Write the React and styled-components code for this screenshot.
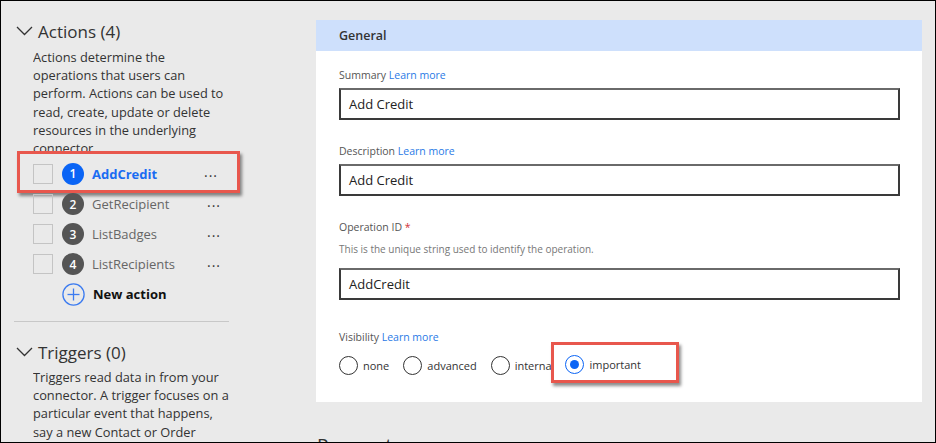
import React from 'react';
import styled, { createGlobalStyle } from 'styled-components';

const GlobalStyle = createGlobalStyle`
  html, body {
    margin: 0;
    padding: 0;
    background: #fff;
  }
  body {
    font-family: 'Open Sans', 'Noto Sans', sans-serif;
    color: #333;
  }
`;

const Frame = styled.div`
  width: 936px;
  height: 443px;
  box-sizing: border-box;
  border: 1px solid #000;
  background: #eaeaea;
  overflow: hidden;
  display: flex;
`;

const Sidebar = styled.aside`
  width: 315px;
  flex-shrink: 0;
  padding: 17px 0 0 15px;
  box-sizing: border-box;
`;

const SectionHeader = styled.div`
  display: flex;
  align-items: center;
  gap: 5px;
  height: 26px;
  margin-top: ${props => props.$top ?? 0}px;
  font-size: 17px;
  color: #333;
`;

const Description = styled.p`
  margin: ${props => props.$top}px 0 0 17px;
  font-size: 12.8px;
  line-height: 18.2px;
  color: #333;
  height: ${props => (props.$clip ? `${props.$clip}px` : 'auto')};
  overflow: hidden;

  span {
    display: block;
    white-space: nowrap;
  }
`;

const ActionList = styled.div`
  display: flex;
  flex-direction: column;
  width: 223px;
  margin-left: 1px;
`;

const ActionRow = styled.div`
  display: flex;
  align-items: center;
  box-sizing: border-box;
  height: ${props => (props.$highlighted ? 42 : 30)}px;
  padding: ${props => (props.$highlighted ? '3px 19px 0 13px' : '0 19px 0 16px')};
  border: ${props => (props.$highlighted ? '3px solid #e8574d' : 'none')};
  box-shadow: ${props => (props.$highlighted ? '2px 3px 3px rgba(0,0,0,0.45)' : 'none')};
  margin: ${props => (props.$highlighted ? '-1px 0 -4px' : '0')};
  position: relative;
`;

const Checkbox = styled.span`
  width: 20px;
  height: 20px;
  box-sizing: border-box;
  border: 1px solid #c4c4c4;
  flex-shrink: 0;
`;

const Badge = styled.span`
  width: 22px;
  height: 22px;
  border-radius: 50%;
  margin-left: 9px;
  background: ${props => (props.$active ? '#0a64f5' : '#555')};
  color: #fff;
  font-size: 12px;
  font-weight: 600;
  display: flex;
  align-items: center;
  justify-content: center;
  flex-shrink: 0;
`;

const ActionName = styled.span`
  margin-left: 8px;
  font-size: 13px;
  font-weight: ${props => (props.$active ? 700 : 400)};
  color: ${props => (props.$active ? '#1b6cf2' : '#666')};
`;

const Dots = styled.span`
  margin-left: auto;
  font-size: 14px;
  letter-spacing: 1px;
  color: #333;
  line-height: 1;
  padding-bottom: 4px;
`;

const NewAction = styled.div`
  display: flex;
  align-items: center;
  height: 30px;
  padding-left: 45px;
  gap: 8px;
  font-size: 13px;
  font-weight: 700;
  color: #111;
`;

const Divider = styled.hr`
  border: none;
  border-top: 1px solid #c8c8c8;
  width: 215px;
  margin: 12px 0 0 -2px;
`;

const Main = styled.main`
  flex: 1;
  padding: 19px 13px 0 0;
  display: flex;
  flex-direction: column;
`;

const Card = styled.section`
  background: #fff;
  height: 382px;
  flex-shrink: 0;
`;

const CardHeader = styled.div`
  height: 31px;
  background: #cee0fc;
  display: flex;
  align-items: center;
  padding-left: 23px;
  font-size: 12.5px;
  font-weight: 600;
  color: #333;
`;

const CardBody = styled.div`
  padding: 16px 22px 0 23px;
`;

const Field = styled.div`
  margin-bottom: ${props => props.$gap ?? 23}px;
`;

const Label = styled.div`
  font-size: 10.5px;
  line-height: 16px;
  color: #555;
  margin-bottom: ${props => props.$mb ?? 5}px;
`;

const Link = styled.span`
  color: #2a7ae6;
`;

const Required = styled.span`
  color: #d13438;
`;

const Hint = styled.div`
  font-size: 10px;
  line-height: 16px;
  color: #777;
  margin: 6px 0 11px;
`;

const Input = styled.div`
  height: 32px;
  box-sizing: border-box;
  border: 2px solid #3a3a3a;
  border-top-color: #6a6a6a;
  display: flex;
  align-items: center;
  padding-left: 8px;
  font-size: 13px;
  color: #222;
`;

const RadioGroup = styled.div`
  display: flex;
  align-items: center;
  gap: 14px;
  margin-top: 10px;
`;

const RadioOption = styled.label`
  display: flex;
  align-items: center;
  gap: 5px;
  font-size: 11px;
  color: #333;
  box-sizing: border-box;
  background: #fff;
  ${props =>
    props.$highlighted &&
    `
    height: 41px;
    padding: 3px 35px 0 11px;
    margin: -13px 0 -8px -17px;
    border: 3px solid #e8574d;
    box-shadow: 2px 3px 3px rgba(0,0,0,0.45);
    position: relative;
  `}
`;

const RadioCircle = styled.span`
  width: 19px;
  height: 19px;
  box-sizing: border-box;
  border-radius: 50%;
  border: 1.5px solid ${props => (props.$checked ? '#0a64f5' : '#333')};
  display: flex;
  align-items: center;
  justify-content: center;
  &::after {
    content: '';
    display: ${props => (props.$checked ? 'block' : 'none')};
    width: 9px;
    height: 9px;
    border-radius: 50%;
    background: #0a64f5;
  }
`;

const NextHeading = styled.div`
  margin: 30px 0 0 1px;
  font-size: 19px;
  color: #333;
`;

function Chevron() {
  return (
    <svg width="17" height="10" viewBox="0 0 17 10">
      <polyline points="1,1 8.5,8.5 16,1" fill="none" stroke="#333" strokeWidth="1.3" />
    </svg>
  );
}

function PlusCircle() {
  return (
    <svg width="23" height="23" viewBox="0 0 23 23">
      <circle cx="11.5" cy="11.5" r="10.6" fill="none" stroke="#3d7cf0" strokeWidth="1.3" />
      <line x1="11.5" y1="5.5" x2="11.5" y2="17.5" stroke="#3d7cf0" strokeWidth="1.3" />
      <line x1="5.5" y1="11.5" x2="17.5" y2="11.5" stroke="#3d7cf0" strokeWidth="1.3" />
    </svg>
  );
}

const actions = ['AddCredit', 'GetRecipient', 'ListBadges', 'ListRecipients'];
const visibility = ['none', 'advanced', 'internal', 'important'];

const actionsText = [
  'Actions determine the',
  'operations that users can',
  'perform. Actions can be used to',
  'read, create, update or delete',
  'resources in the underlying',
  'connector.',
];

const triggersText = [
  'Triggers read data in from your',
  'connector. A trigger focuses on a',
  'particular event that happens,',
  'say a new Contact or Order',
];

export default function App() {
  return (
    <>
      <GlobalStyle />
      <Frame>
        <Sidebar>
          <SectionHeader>
            <Chevron />
            Actions (4)
          </SectionHeader>
          <Description $top={4} $clip={104}>
            {actionsText.map(line => (
              <span key={line}>{line}</span>
            ))}
          </Description>
          <ActionList>
            {actions.map((name, i) => (
              <ActionRow key={name} $highlighted={i === 0}>
                <Checkbox />
                <Badge $active={i === 0}>{i + 1}</Badge>
                <ActionName $active={i === 0}>{name}</ActionName>
                <Dots>...</Dots>
              </ActionRow>
            ))}
            <NewAction>
              <PlusCircle />
              New action
            </NewAction>
          </ActionList>
          <Divider />
          <SectionHeader $top={17}>
            <Chevron />
            Triggers (0)
          </SectionHeader>
          <Description $top={3}>
            {triggersText.map(line => (
              <span key={line}>{line}</span>
            ))}
          </Description>
        </Sidebar>
        <Main>
          <Card>
            <CardHeader>General</CardHeader>
            <CardBody>
              <Field>
                <Label>
                  Summary <Link>Learn more</Link>
                </Label>
                <Input>Add Credit</Input>
              </Field>
              <Field>
                <Label>
                  Description <Link>Learn more</Link>
                </Label>
                <Input>Add Credit</Input>
              </Field>
              <Field $gap={29}>
                <Label $mb={0}>
                  Operation ID <Required>*</Required>
                </Label>
                <Hint>This is the unique string used to identify the operation.</Hint>
                <Input>AddCredit</Input>
              </Field>
              <Field $gap={0}>
                <Label $mb={0}>
                  Visibility <Link>Learn more</Link>
                </Label>
                <RadioGroup>
                  {visibility.map(v => (
                    <RadioOption key={v} $highlighted={v === 'important'}>
                      <RadioCircle $checked={v === 'important'} />
                      {v}
                    </RadioOption>
                  ))}
                </RadioGroup>
              </Field>
            </CardBody>
          </Card>
          <NextHeading>Parameters</NextHeading>
        </Main>
      </Frame>
    </>
  );
}
